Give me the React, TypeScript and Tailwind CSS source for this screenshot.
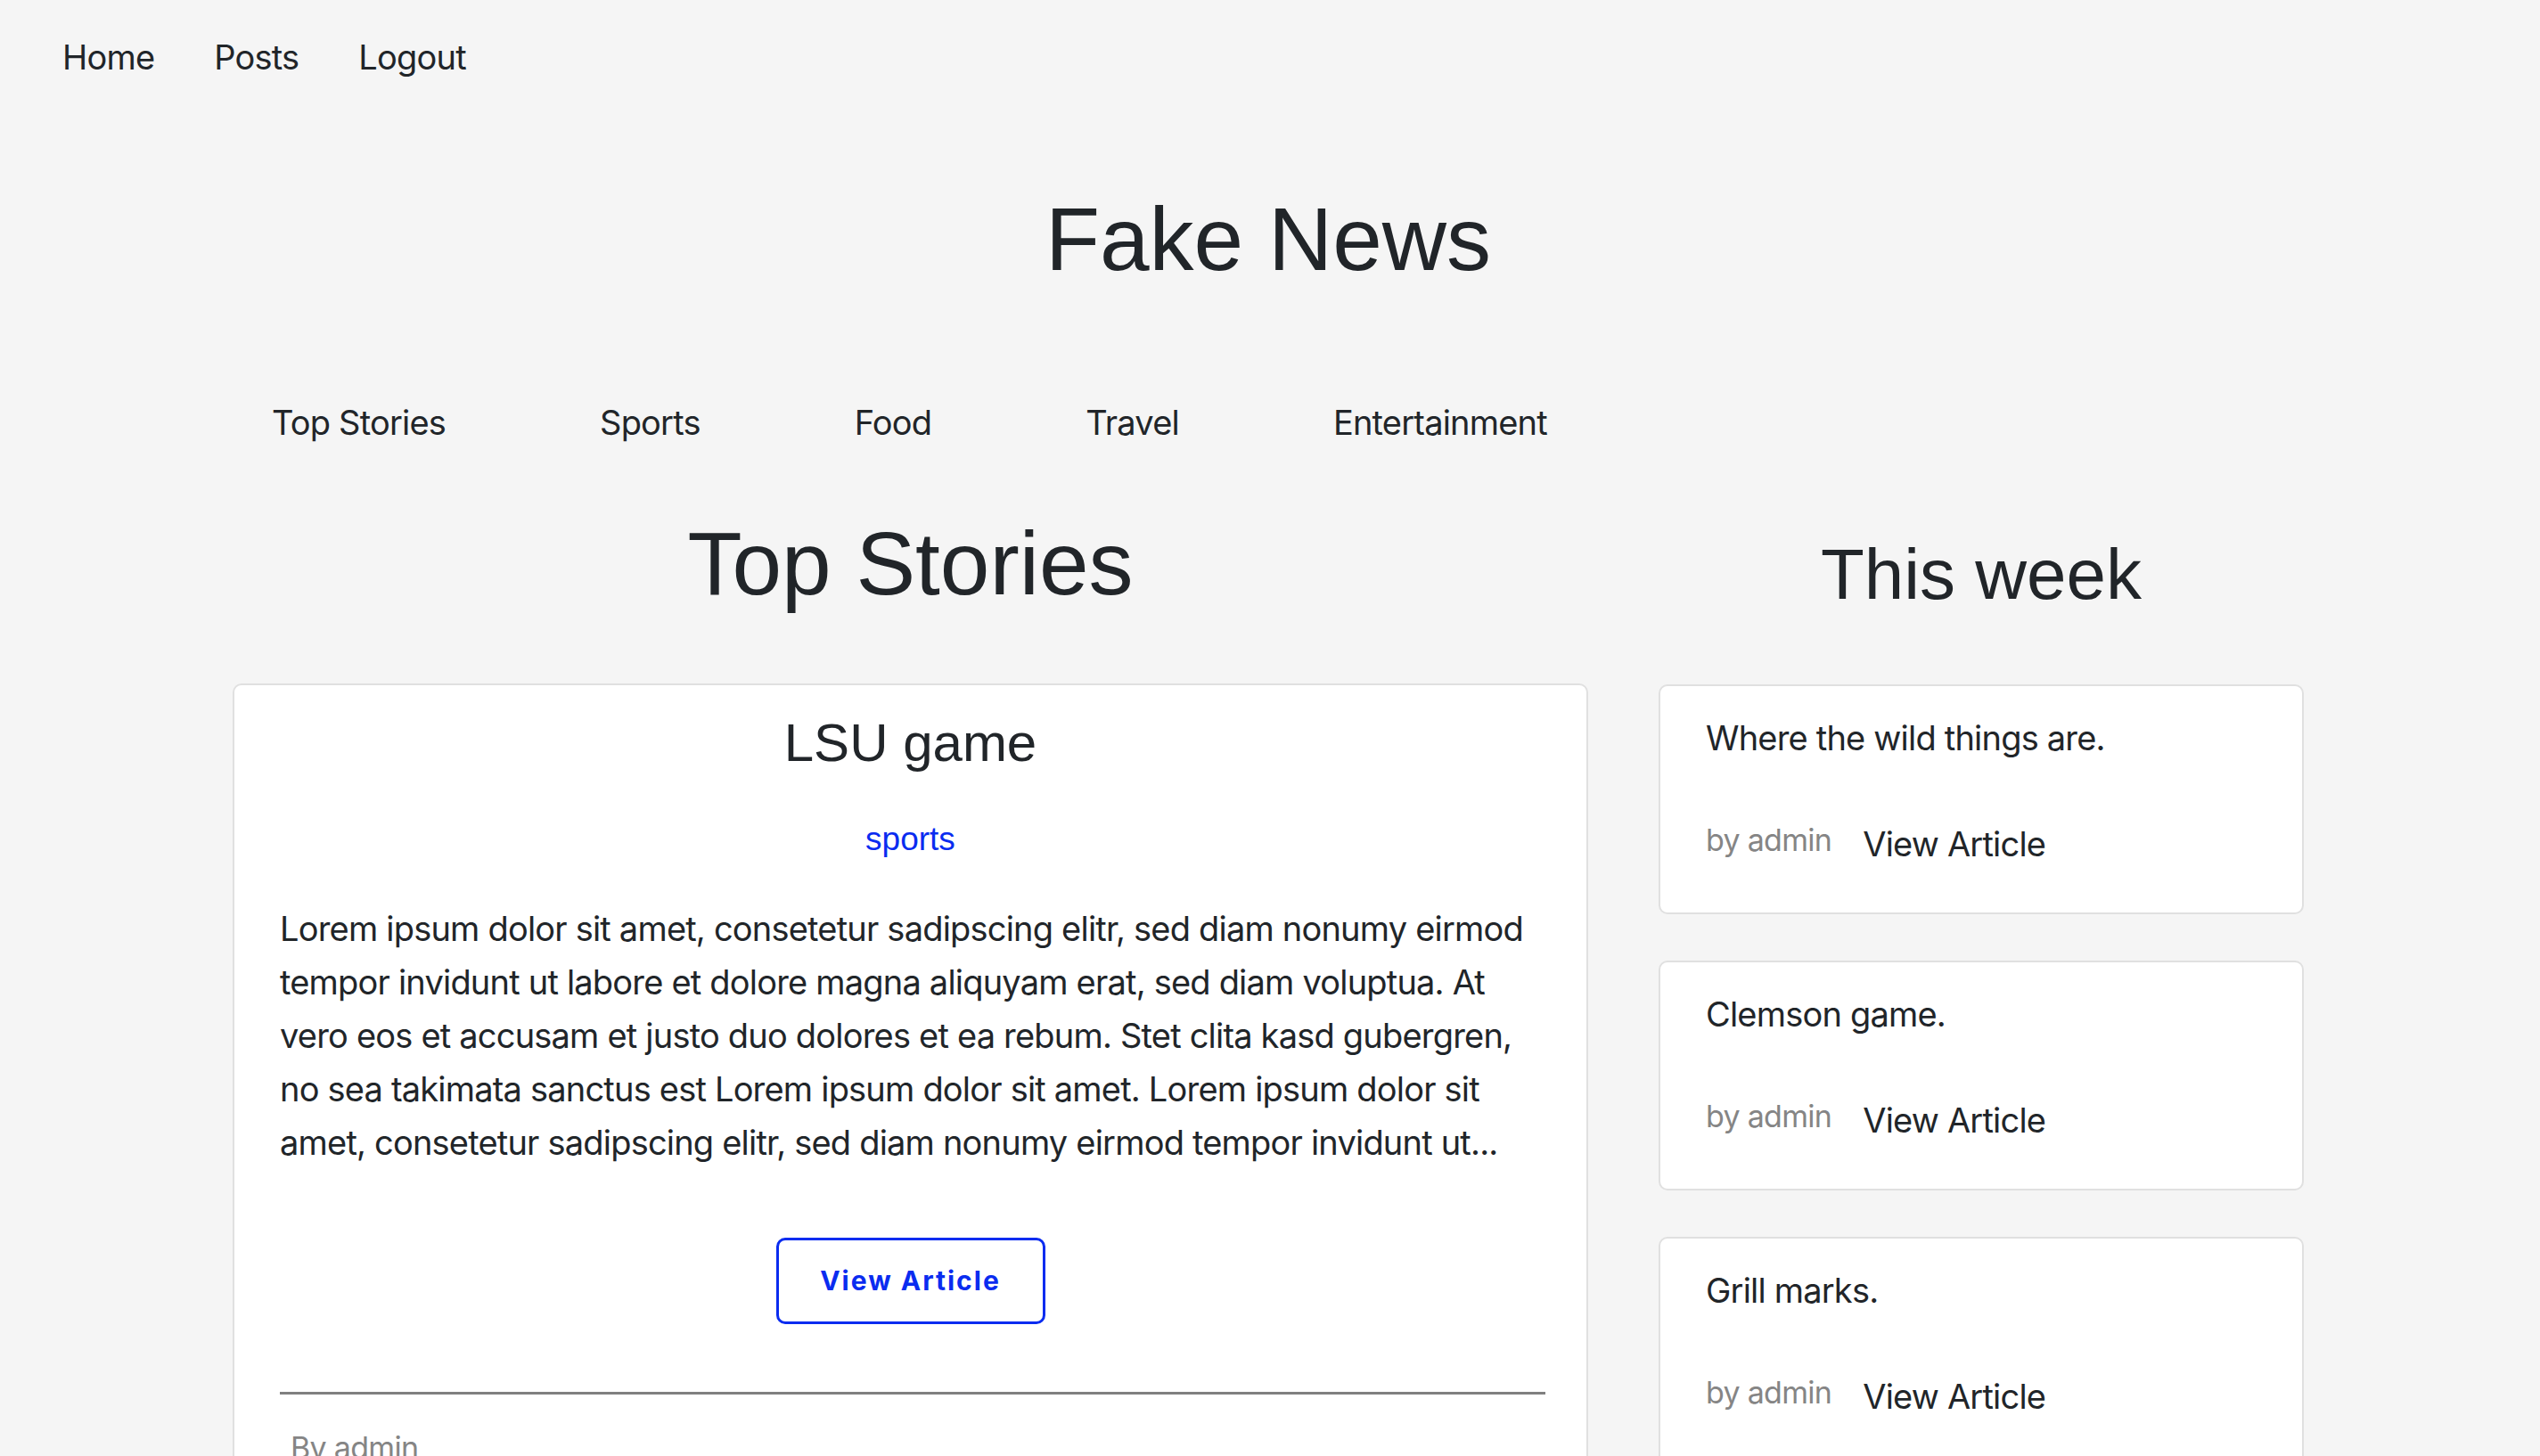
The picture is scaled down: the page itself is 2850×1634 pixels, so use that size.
import React from "react";

const inter = { fontFamily: "Inter, 'Noto Sans', sans-serif" };

function SideCard({ title }: { title: string }) {
  return (
    <div className="h-[258px] w-full rounded-[10px] border-2 border-[#e0e0e0] bg-white pl-[51px] pt-[28px]">
      <div className="whitespace-nowrap text-[38px] leading-[60px] tracking-[-0.8px] text-[#212529]">
        {title}
      </div>
      <div className="mt-[59px] flex items-start gap-[35px]">
        <span className="whitespace-nowrap text-[34px] leading-[52px] tracking-[-0.7px] text-[#858585]">
          by admin
        </span>
        <a className="whitespace-nowrap text-[38px] leading-[60px] tracking-[-0.8px] text-[#212529]">
          View Article
        </a>
      </div>
    </div>
  );
}

export default function App() {
  return (
    <div
      className="min-h-screen w-full bg-[#f5f5f5] pr-[4px] text-[#212529]"
      style={inter}
    >
      <nav className="flex gap-[67px] pl-[70px] pt-[34px] text-[38px] leading-[60px] tracking-[-0.8px]">
        <a className="whitespace-nowrap">Home</a>
        <a className="whitespace-nowrap">Posts</a>
        <a className="whitespace-nowrap">Logout</a>
      </nav>

      <div className="mx-auto w-[2324px]">
        <h1 className="mt-[114px] text-center font-['Liberation_Sans',Arial,sans-serif] text-[100px] leading-[120px]">
          Fake News
        </h1>

        <div className="flex gap-[79px]">
          <div className="w-[1521px] shrink-0">
            <ul className="mt-[116px] flex gap-[173px] pl-[44px] text-[38px] leading-[60px] tracking-[-0.8px]">
              <li className="shrink-0 whitespace-nowrap">Top Stories</li>
              <li className="shrink-0 whitespace-nowrap">Sports</li>
              <li className="shrink-0 whitespace-nowrap">Food</li>
              <li className="shrink-0 whitespace-nowrap">Travel</li>
              <li className="shrink-0 whitespace-nowrap">Entertainment</li>
            </ul>

            <h2 className="mt-[68px] text-center font-['Liberation_Sans',Arial,sans-serif] text-[100px] leading-[120px]">
              Top Stories
            </h2>

            <div className="mt-[75px] flex flex-col items-center rounded-[10px] border-2 border-[#e0e0e0] bg-white px-[51px] pt-[29px] pb-[40px]">
              <h3 className="font-['Liberation_Sans',Arial,sans-serif] text-[60px] leading-[72px]">
                LSU game
              </h3>
              <a className="mt-[50px] font-['Liberation_Sans',Arial,sans-serif] text-[37px] leading-[44px] text-[#0a2cf0]">
                sports
              </a>
              <p className="mt-[48px] w-full whitespace-nowrap text-[38px] leading-[60px] tracking-[-0.8px]">
                Lorem ipsum dolor sit amet, consetetur sadipscing elitr, sed diam nonumy eirmod
                <br />
                tempor invidunt ut labore et dolore magna aliquyam erat, sed diam voluptua. At
                <br />
                vero eos et accusam et justo duo dolores et ea rebum. Stet clita kasd gubergren,
                <br />
                no sea takimata sanctus est Lorem ipsum dolor sit amet. Lorem ipsum dolor sit
                <br />
                amet, consetetur sadipscing elitr, sed diam nonumy eirmod tempor invidunt ut...
              </p>
              <button className="mt-[77px] flex h-[97px] w-[302px] items-center justify-center rounded-[10px] border-[3px] border-[#0a2cf0] bg-white text-[30px] font-bold tracking-[2px] text-[#0a2cf0]">
                View Article
              </button>
              <hr className="mt-[76px] w-[calc(100%+5px)] self-start border-0 border-t-[3px] border-[#808080]" />
              <div className="mt-[34px] w-full pl-[12px] text-[34px] leading-[52px] tracking-[-0.7px] text-[#858585]">
                By admin
              </div>
            </div>
          </div>

          <div className="w-[724px] shrink-0">
            <h2 className="mt-[269px] text-center font-['Liberation_Sans',Arial,sans-serif] text-[80px] leading-[96px]">
              This week
            </h2>
            <div className="mt-[75px] flex flex-col gap-[52px]">
              <SideCard title="Where the wild things are." />
              <SideCard title="Clemson game." />
              <SideCard title="Grill marks." />
            </div>
          </div>
        </div>
      </div>
    </div>
  );
}
